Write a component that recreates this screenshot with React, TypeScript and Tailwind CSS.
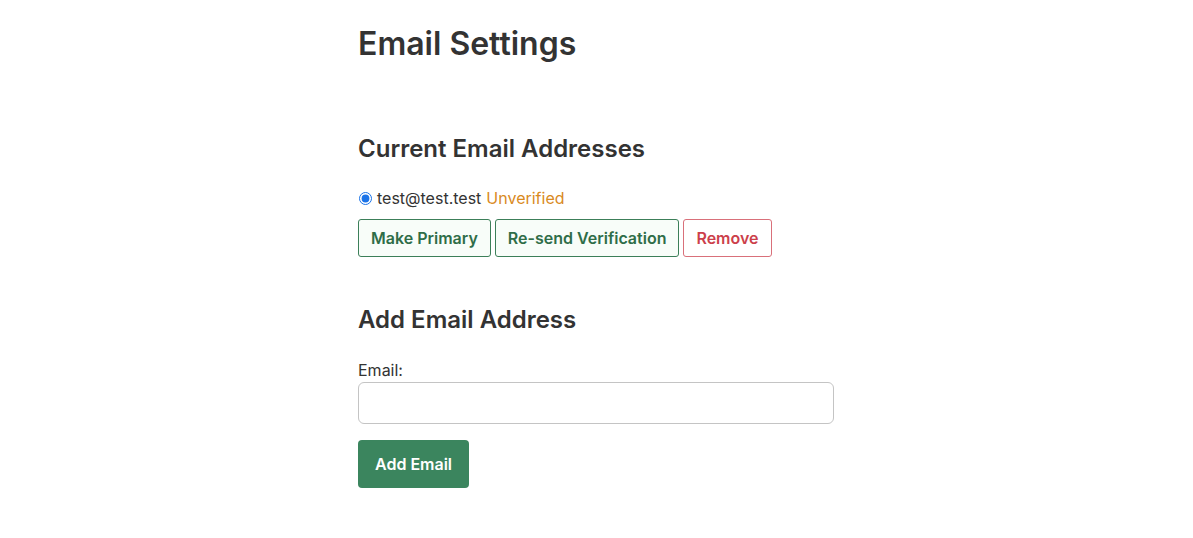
export default function App() {
  return (
    <div className="min-h-screen bg-white text-[#333] font-['Inter','Liberation_Sans',sans-serif]">
      <div className="mx-auto w-[477px] pt-[25px]">
        <h1 className="text-[32px] leading-[38px] font-semibold">Email Settings</h1>

        {/* Current addresses */}
        <h2 className="mt-[71px] text-[24px] leading-[29px] font-semibold">
          Current Email Addresses
        </h2>
        <div className="mt-[23px] flex items-center text-base leading-6">
          <input
            type="radio"
            defaultChecked
            name="primary"
            className="ml-[1px] mr-[5px] h-[13px] w-[13px] accent-[#1a73e8]"
          />
          <span>test@test.test</span>
          <span className="ml-[5px] text-[#d98a1e]">Unverified</span>
        </div>
        <div className="mt-[9px] flex gap-[4px]">
          <button className="rounded-[3px] border border-[#3c7f59] bg-[#f8fdf9] px-3 py-[6px] text-base leading-6 font-semibold text-[#2f6d48]">
            Make Primary
          </button>
          <button className="rounded-[3px] border border-[#3c7f59] bg-[#f8fdf9] px-3 py-[6px] text-base leading-6 font-semibold text-[#2f6d48]">
            Re-send Verification
          </button>
          <button className="rounded-[3px] border border-[#d9707a] bg-white px-3 py-[6px] text-base leading-6 font-semibold text-[#cc3f4b]">
            Remove
          </button>
        </div>

        {/* Add address */}
        <h2 className="mt-[48px] text-[24px] leading-[29px] font-semibold">Add Email Address</h2>
        <form className="mt-[24px]" onSubmit={(e) => e.preventDefault()}>
          <label className="block text-base leading-6">Email:</label>
          <input
            type="email"
            className="block h-[42px] w-[476px] rounded-[6px] border border-[#c4c4c4] px-3 text-base outline-none"
          />
          <button
            type="submit"
            className="mt-4 h-12 rounded-[4px] bg-[#3b855e] px-[17px] text-base font-semibold text-white"
          >
            Add Email
          </button>
        </form>
      </div>
    </div>
  );
}
